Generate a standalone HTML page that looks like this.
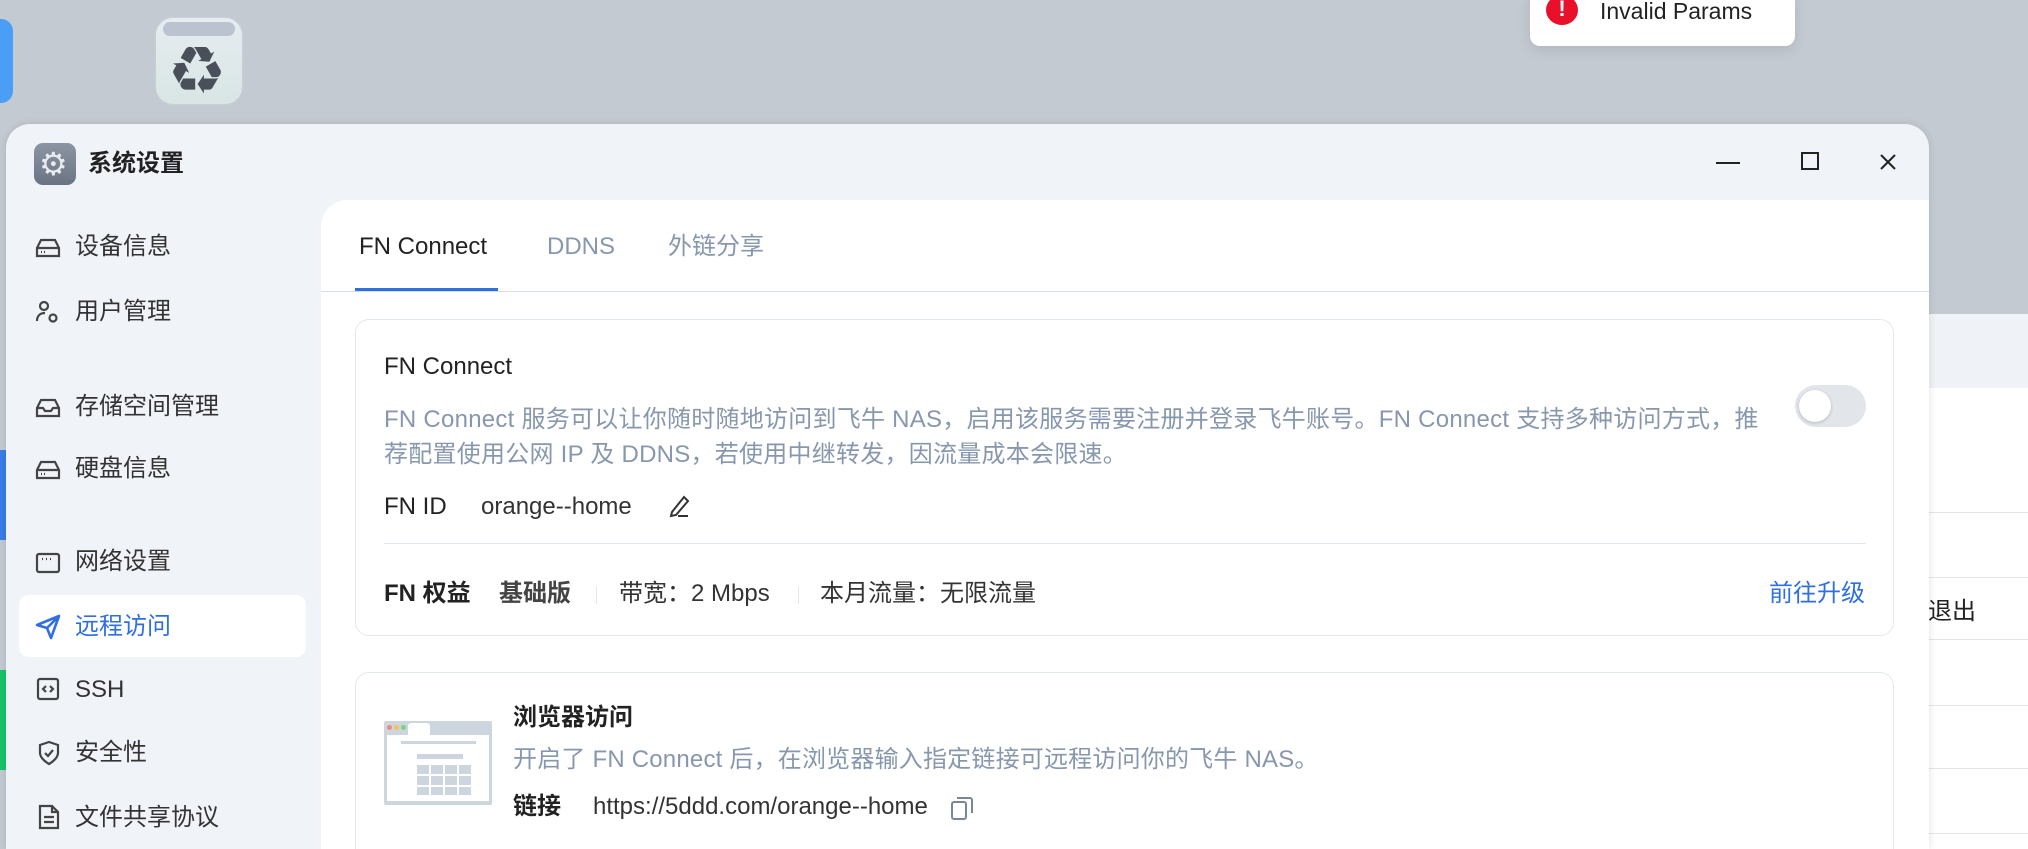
<!DOCTYPE html>
<html><head><meta charset="utf-8"><style>
*{margin:0;padding:0;box-sizing:border-box}
body{width:2028px;height:849px;overflow:hidden;background:#c4cad2;font-family:"Liberation Sans","Noto Sans CJK SC",sans-serif;position:relative;color:#222}
.a{position:absolute;white-space:nowrap;line-height:30px}
.win{position:absolute;left:6px;top:124px;width:1923px;height:725px;background:#f0f3f8;border-radius:24px 24px 0 0;box-shadow:0 0 8px rgba(0,0,0,.12);overflow:hidden}
.side{font-size:24px;color:#333}
.side svg{position:absolute}
</style></head><body>
<!-- desktop -->
<div class="a" style="left:-20px;top:19px;width:33px;height:84px;background:#4a9ef5;border-radius:12px"></div>
<div class="a" style="left:0;top:450px;width:6px;height:90px;background:#3a7de8"></div>
<div class="a" style="left:0;top:670px;width:6px;height:100px;background:#16c46a"></div>
<div class="a" style="left:155px;top:17px;width:88px;height:88px;border-radius:18px;background:linear-gradient(#e6ecf0,#d8e6e4);border:1px solid #c8d0d6"></div>
<div class="a" style="left:163px;top:22px;width:72px;height:14px;border-radius:7px;background:#bcc3d0"></div>
<div class="a" style="left:172px;top:46px;font-size:50px;color:#4a505a;line-height:50px">♻</div>
<!-- behind panel -->
<div class="a" style="left:1900px;top:314px;width:128px;height:74px;background:#eff2f6"></div>
<div class="a" style="left:1900px;top:388px;width:128px;height:461px;background:#fff"></div>
<div class="a" style="left:1900px;top:512px;width:128px;height:1px;background:#e2e6ec"></div>
<div class="a" style="left:1900px;top:577px;width:128px;height:1px;background:#e2e6ec"></div>
<div class="a" style="left:1900px;top:639px;width:128px;height:1px;background:#e2e6ec"></div>
<div class="a" style="left:1900px;top:705px;width:128px;height:1px;background:#e2e6ec"></div>
<div class="a" style="left:1900px;top:768px;width:128px;height:1px;background:#e2e6ec"></div>
<div class="a" style="left:1900px;top:833px;width:128px;height:1px;background:#e2e6ec"></div>
<div class="a" style="left:1904px;top:597px;font-size:24px;color:#222">录退出</div>
<!-- toast -->
<div class="a" style="left:1530px;top:-10px;width:265px;height:56px;background:#fff;border-radius:10px;box-shadow:0 4px 14px rgba(0,0,0,.1)"></div>
<div class="a" style="left:1546px;top:-5px;width:32px;height:30px;border-radius:50%;background:#e8102a;color:#fff;font-weight:bold;font-size:22px;text-align:center;line-height:28px">!</div>
<div class="a" style="left:1600px;top:-4px;font-size:23px;color:#222">Invalid Params</div>

<div class="win">
 <div class="a" style="left:28px;top:19px;width:42px;height:42px;border-radius:9px;background:linear-gradient(#8c95a3,#6b7482)"></div>
 <div class="a" style="left:33px;top:20px;font-size:32px;line-height:40px;color:#e8ebef">⚙</div>
 <div class="a" style="left:82px;top:25px;font-size:24px;font-weight:bold;color:#222">系统设置</div>
 <div class="a" style="left:1710px;top:38px;width:24px;height:2px;background:#222"></div>
 <div class="a" style="left:1795px;top:28px;width:18px;height:18px;border:2px solid #222"></div>
 <svg class="a" style="left:1873px;top:29px" width="18" height="18"><path d="M2 2L16 16M16 2L2 16" stroke="#222" stroke-width="2"/></svg>

 <div class="side">
  <svg style="left:29px;top:113px" width="26" height="22" fill="none" stroke="#444" stroke-width="2.2"><path d="M2 11L6 3H20L24 11V19H2Z M2 11H24"/><path d="M6 15h1M9 15h1"/></svg>
  <div class="a" style="left:69px;top:108px">设备信息</div>
  <svg style="left:29px;top:176px" width="26" height="24" fill="none" stroke="#444" stroke-width="2.2"><circle cx="9" cy="6" r="4"/><path d="M2 21c0-5 3-8 8-8"/><circle cx="18" cy="18" r="3.5"/></svg>
  <div class="a" style="left:69px;top:173px">用户管理</div>
  <svg style="left:29px;top:273px" width="26" height="22" fill="none" stroke="#444" stroke-width="2.2"><path d="M2 11L6 3H20L24 11V19H2Z M2 11H8L10 14H16L18 11H24"/></svg>
  <div class="a" style="left:69px;top:268px">存储空间管理</div>
  <svg style="left:29px;top:335px" width="26" height="22" fill="none" stroke="#444" stroke-width="2.2"><path d="M2 11L6 3H20L24 11V19H2Z M2 11H24"/><path d="M6 15h1M9 15h1"/></svg>
  <div class="a" style="left:69px;top:330px">硬盘信息</div>
  <svg style="left:29px;top:428px" width="26" height="22" fill="none" stroke="#444" stroke-width="2.2"><rect x="2" y="2" width="22" height="18" rx="2"/><path d="M7 7h1M11 7h1M15 7h1"/></svg>
  <div class="a" style="left:69px;top:423px">网络设置</div>
  <div class="a" style="left:13px;top:471px;width:287px;height:62px;background:#fff;border-radius:10px"></div>
  <svg style="left:29px;top:490px" width="26" height="26" fill="none" stroke="#2f6fe0" stroke-width="2.6" stroke-linejoin="round"><path d="M2 11L24 2L16 24L12 14Z M12 14L24 2"/></svg>
  <div class="a" style="left:69px;top:488px;color:#2f6fe0">远程访问</div>
  <svg style="left:30px;top:553px" width="24" height="24" fill="none" stroke="#444" stroke-width="2.2"><rect x="2" y="2" width="20" height="20" rx="2"/><path d="M10 9l-3 3 3 3M14 9l3 3-3 3"/></svg>
  <div class="a" style="left:69px;top:551px">SSH</div>
  <svg style="left:32px;top:616px" width="22" height="26" fill="none" stroke="#444" stroke-width="2.2"><path d="M11 2L20 5V13C20 19 11 24 11 24C11 24 2 19 2 13V5Z"/><path d="M7 13l3 3 5-6"/></svg>
  <div class="a" style="left:69px;top:614px">安全性</div>
  <svg style="left:32px;top:680px" width="22" height="26" fill="none" stroke="#444" stroke-width="2.2"><path d="M2 2H14L20 8V24H2Z M14 2V8H20 M6 13h10M6 18h10"/></svg>
  <div class="a" style="left:69px;top:679px">文件共享协议</div>
 </div>

 <div class="a" style="left:315px;top:76px;width:1608px;height:649px;background:#fff;border-radius:26px 0 0 0;overflow:hidden">
  <div class="a" style="left:38px;top:32px;font-size:24px;color:#222">FN Connect</div>
  <div class="a" style="left:226px;top:32px;font-size:24px;color:#8797ad">DDNS</div>
  <div class="a" style="left:347px;top:32px;font-size:24px;color:#8797ad">外链分享</div>
  <div class="a" style="left:34px;top:88px;width:143px;height:3px;background:#2f6fe0"></div>
  <div class="a" style="left:0;top:91px;width:1608px;height:1px;background:#d8dee8"></div>

  <div class="a" style="left:34px;top:119px;width:1539px;height:317px;border:1px solid #e3e8ef;border-radius:14px">
   <div class="a" style="left:28px;top:32px;font-size:24px;color:#222">FN Connect</div>
   <div class="a" style="left:28px;top:82px;font-size:24px;letter-spacing:0.25px;line-height:35px;color:#8797ad">FN Connect 服务可以让你随时随地访问到飞牛 NAS，启用该服务需要注册并登录飞牛账号。FN Connect 支持多种访问方式，推<br>荐配置使用公网 IP 及 DDNS，若使用中继转发，因流量成本会限速。</div>
   <div class="a" style="left:1439px;top:65px;width:71px;height:42px;border-radius:21px;background:#e2e5ea"></div>
   <div class="a" style="left:1443px;top:70px;width:32px;height:32px;border-radius:50%;background:#fff;box-shadow:0 1px 3px rgba(0,0,0,.2)"></div>
   <div class="a" style="left:28px;top:172px;font-size:24px;color:#222">FN ID</div>
   <div class="a" style="left:125px;top:172px;font-size:24px;color:#333">orange--home</div>
   <svg class="a" style="left:312px;top:174px" width="22" height="24" fill="none" stroke="#333" stroke-width="2"><path d="M4 18L16 3L20 7L8 21L3 22Z M10 22H20"/></svg>
   <div class="a" style="left:28px;top:223px;width:1482px;height:1px;background:#e3e8ef"></div>
   <div class="a" style="left:28px;top:259px;font-size:24px;font-weight:bold;color:#222">FN 权益</div>
   <div class="a" style="left:143px;top:259px;font-size:24px;font-weight:bold;color:#444">基础版</div>
   <div class="a" style="left:240px;top:266px;width:1px;height:18px;background:#e3e8ef"></div>
   <div class="a" style="left:263px;top:259px;font-size:24px;color:#333">带宽：2 Mbps</div>
   <div class="a" style="left:442px;top:266px;width:1px;height:18px;background:#e3e8ef"></div>
   <div class="a" style="left:464px;top:259px;font-size:24px;color:#333">本月流量：无限流量</div>
   <div class="a" style="left:1413px;top:259px;font-size:24px;color:#2f6fe0">前往升级</div>
  </div>

  <div class="a" style="left:34px;top:472px;width:1539px;height:177px;border:1px solid #e3e8ef;border-bottom:none;border-radius:14px 14px 0 0">
   <div class="a" style="left:28px;top:48px;width:108px;height:84px;background:#cdd5df;border-radius:2px"></div>
   <div class="a" style="left:31px;top:62px;width:102px;height:66px;background:#fff"></div>
   <div class="a" style="left:31px;top:52px;width:5px;height:5px;border-radius:50%;background:#f08a7a"></div>
   <div class="a" style="left:38px;top:52px;width:5px;height:5px;border-radius:50%;background:#f2c460"></div>
   <div class="a" style="left:45px;top:52px;width:5px;height:5px;border-radius:50%;background:#7bd47a"></div>
   <div class="a" style="left:52px;top:50px;width:22px;height:12px;background:#fff;border-radius:3px 3px 0 0"></div>
   <div class="a" style="left:45px;top:68px;width:75px;height:3px;background:#cdd5df"></div>
   <div class="a" style="left:61px;top:81px;width:46px;height:5px;background:#cdd5df"></div>
   <div class="a" style="left:61px;top:92px;width:56px;height:30px;background:repeating-linear-gradient(90deg,#cdd5df 0 12px,transparent 12px 14px),#fff;-webkit-mask:repeating-linear-gradient(#000 0 9px,transparent 9px 11px)"></div>
   <div class="a" style="left:157px;top:30px;font-size:24px;font-weight:bold;color:#222">浏览器访问</div>
   <div class="a" style="left:157px;top:72px;font-size:24px;letter-spacing:0.2px;color:#8797ad">开启了 FN Connect 后，在浏览器输入指定链接可远程访问你的飞牛 NAS。</div>
   <div class="a" style="left:157px;top:119px;font-size:24px;font-weight:bold;color:#222">链接</div>
   <div class="a" style="left:237px;top:119px;font-size:24px;color:#333">https://5ddd.com/orange--home</div>
   <svg class="a" style="left:594px;top:122px" width="24" height="26" fill="none" stroke="#7a879a" stroke-width="2"><rect x="2" y="7" width="14" height="17" rx="2"/><path d="M7 3H20A2 2 0 0 1 22 5V18"/></svg>
  </div>
 </div>
</div>
</body></html>
